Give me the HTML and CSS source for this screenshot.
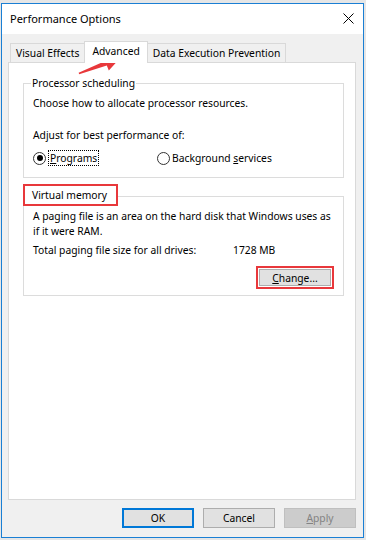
FILE: index.html
```html
<!DOCTYPE html>
<html lang="en">
<head>
  <meta charset="UTF-8" />
  <title>Performance Options</title>
  <link rel="stylesheet" href="styles.css">
</head>
<body>
  <div class="window">
    <div class="titlebar">
      <span class="title">Performance Options</span>
      <svg class="close" width="11" height="11" viewBox="0 0 11 11">
        <path d="M0.5 0.5 L10.5 10.5 M10.5 0.5 L0.5 10.5" stroke="#000" stroke-width="1" fill="none"/>
      </svg>
    </div>

    <div class="client">
      <div class="tabs">
        <div class="tab">Visual Effects</div>
        <div class="tab active">Advanced</div>
        <div class="tab">Data Execution Prevention</div>
      </div>

      <div class="panel">
        <div class="group">
          <div class="group-title">Processor scheduling</div>
          <div class="line choose">Choose how to allocate processor resources.</div>
          <div class="line adjust">Adjust for best performance of:</div>
          <div class="radio-row">
            <div class="option first">
              <span class="radio checked"></span>
              <span class="focus"><u>P</u>rograms</span>
            </div>
            <div class="option">
              <span class="radio"></span>
              <span class="label">Background <u>s</u>ervices</span>
            </div>
          </div>
        </div>

        <div class="group vm">
          <div class="group-title marked">Virtual memory</div>
          <p class="para">A paging file is an area on the hard disk that Windows uses as if it were RAM.</p>
          <div class="line total">
            <span class="total-label">Total paging file size for all drives:</span>
            <span>1728 MB</span>
          </div>
          <div class="change-row">
            <div class="highlight">
              <button class="btn small"><u>C</u>hange...</button>
            </div>
          </div>
        </div>
      </div>

      <div class="actions">
        <button class="btn default">OK</button>
        <button class="btn">Cancel</button>
        <button class="btn disabled"><u>A</u>pply</button>
      </div>
    </div>

    <svg class="arrow" width="48" height="24" viewBox="0 0 48 24">
      <polygon points="3.2,20.2 30.8,11.6 32.8,16.4 44.5,3.8 27.2,2.4 29.2,7 2.6,18.8" fill="#e8383b"/>
    </svg>
  </div>
</body>
</html>
```

FILE: styles.css
```css
:root {
  --red-mark: #e8383b;
  --line: #dcdcdc;
  --face: #f0f0f0;
}

body {
  margin: 0;
  background: #e6e6e6;
  font-family: 'Noto Sans', 'Open Sans', sans-serif;
  font-size: 10.3px;
  line-height: 16px;
  color: #000;
}

.window {
  position: relative;
  box-sizing: border-box;
  width: 363px;
  height: 535px;
  margin: 3px 0 0 1px;
  border: 1px solid #1a7fd4;
  background: var(--face);
  display: flex;
  flex-direction: column;
}

.titlebar {
  height: 30px;
  background: #fff;
  display: flex;
  align-items: center;
  justify-content: space-between;
  padding: 0 9px 0 8px;
}

.title {
  font-size: 11px;
  padding-bottom: 1px;
}

.close {
  display: block;
  margin-bottom: 2px;
}

.client {
  flex: 1;
  padding: 7px 7px 8px 6px;
  display: flex;
  flex-direction: column;
}

/* tab strip */
.tabs {
  display: flex;
  align-items: flex-end;
  height: 21px;
  padding-left: 2px;
}

.tab {
  box-sizing: border-box;
  height: 19px;
  padding: 0 5px;
  border: 1px solid #d9d9d9;
  border-bottom: none;
  background: var(--face);
  line-height: 19px;
  margin-right: -1px;
  white-space: nowrap;
}

.tab.active {
  position: relative;
  z-index: 1;
  height: 22px;
  margin-bottom: -1px;
  padding: 0 7px;
  background: #fff;
  line-height: 19px;
}

.panel {
  box-sizing: border-box;
  height: 438px;
  border: 1px solid #d9d9d9;
  background: #fff;
  padding: 20px 11px 0 14px;
}

/* group boxes */
.group {
  border: 1px solid var(--line);
  padding: 0 9px 11px;
}

.group-title {
  width: max-content;
  margin: -9px 0 0 -2px;
  padding: 0 1px;
  background: #fff;
}

.group-title.marked {
  margin: -13px 0 0 -10px;
  padding: 1px 9px 1px 7px;
  border: 2px solid var(--red-mark);
}

.choose {
  margin-top: 4px;
}

.adjust {
  margin-top: 16px;
}

.radio-row {
  display: flex;
  align-items: center;
  margin-top: 7px;
  height: 16px;
}

.option {
  display: flex;
  align-items: center;
}

.option.first {
  width: 124px;
}

.radio {
  box-sizing: border-box;
  width: 13px;
  height: 13px;
  border: 1px solid #333;
  border-radius: 50%;
  background: #fff;
  position: relative;
  flex: none;
}

.radio.checked::after {
  content: '';
  position: absolute;
  left: 2.5px;
  top: 2.5px;
  width: 6px;
  height: 6px;
  border-radius: 50%;
  background: #000;
}

.focus {
  margin-left: 2px;
  padding: 0 1px;
  border: 1px dotted #000;
  line-height: 14px;
}

.label {
  margin-left: 2px;
}

.group.vm {
  margin-top: 18px;
  padding-bottom: 6px;
}

.para {
  margin: 3px 0 0;
  line-height: 15px;
}

.total {
  display: flex;
  margin-top: 3px;
}

.total-label {
  width: 200px;
}

.change-row {
  display: flex;
  justify-content: flex-end;
  margin-top: 8px;
}

.highlight {
  border: 2px solid var(--red-mark);
  padding: 1px;
}

/* buttons */
.btn {
  box-sizing: border-box;
  width: 72px;
  height: 20px;
  padding: 0;
  border: 1px solid #adadad;
  background: #e1e1e1;
  font: inherit;
  color: #000;
  display: block;
}

.btn.small {
  height: 17px;
  line-height: 14px;
}

.btn.default {
  border: 2px solid #0078d7;
}

.btn.disabled {
  background: #cccccc;
  border-color: #bfbfbf;
  color: #838383;
}

.actions {
  display: flex;
  justify-content: flex-end;
  gap: 9px;
  margin-top: 8px;
}

.arrow {
  position: absolute;
  left: 74px;
  top: 50px;
}
```
